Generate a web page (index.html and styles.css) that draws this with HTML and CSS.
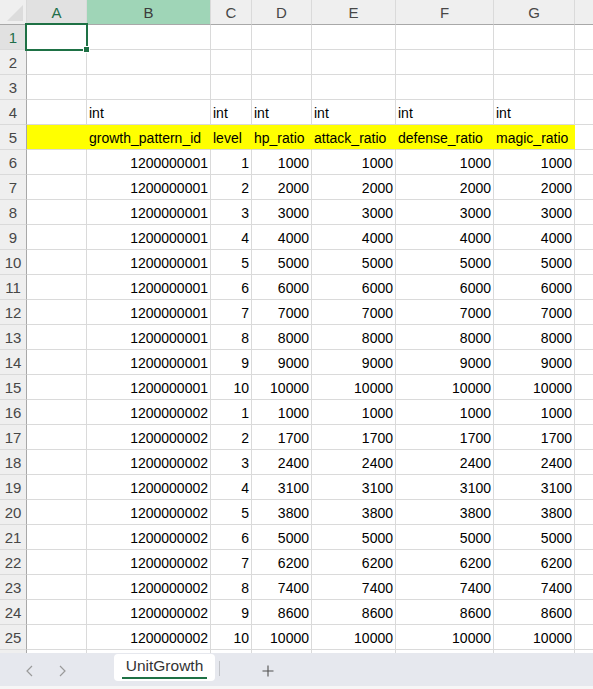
FILE: index.html
```html
<!DOCTYPE html>
<html lang="ja">
<head>
  <meta charset="UTF-8">
  <title>UnitGrowth</title>
  <link rel="stylesheet" href="styles.css">
</head>
<body>

  <div class="sheet">
    <div id="grid" class="grid"></div>
  </div>

  <div class="tabBar">
    <div class="tabNav">
      <svg width="10" height="12" viewBox="0 0 10 12"><polyline points="7,1 2,6 7,11" fill="none" stroke="#9a9a9a" stroke-width="1.2"/></svg>
      <svg width="10" height="12" viewBox="0 0 10 12"><polyline points="3,1 8,6 3,11" fill="none" stroke="#9a9a9a" stroke-width="1.2"/></svg>
    </div>
    <div class="tab active">UnitGrowth</div>
    <div class="tabSep"></div>
    <div class="addTab">
      <svg width="12" height="12" viewBox="0 0 12 12"><path d="M6 0.5V11.5M0.5 6H11.5" stroke="#505050" stroke-width="1.1"/></svg>
    </div>
  </div>
  <div class="statusStrip"></div>

  <script>
    const grid = document.getElementById('grid');
    const letters = ['A', 'B', 'C', 'D', 'E', 'F', 'G', ''];

    function addCell(text, cls) {
      const cell = document.createElement('div');
      cell.className = 'cell ' + (cls || '');
      if (text !== undefined && text !== '') {
        const span = document.createElement('span');
        span.textContent = text;
        cell.appendChild(span);
      }
      grid.appendChild(cell);
      return cell;
    }

    // column headers
    const corner = addCell('', 'corner');
    corner.innerHTML = '<div class="cornerMark"></div>';
    letters.forEach((l, i) => {
      let cls = 'colHead';
      if (i === 0) cls += ' selected';
      if (i === 1) cls += ' hover';
      addCell(l, cls);
    });

    // build row contents
    const rows = [];
    rows.push([]);
    rows.push([]);
    rows.push([]);
    rows.push(['', 'int', 'int', 'int', 'int', 'int', 'int']);
    rows.push(['', 'growth_pattern_id', 'level', 'hp_ratio', 'attack_ratio', 'defense_ratio', 'magic_ratio']);

    for (let lv = 1; lv <= 10; lv++) {
      const v = lv * 1000;
      rows.push(['', 1200000001, lv, v, v, v, v]);
    }
    const second = [1000, 1700, 2400, 3100, 3800, 5000, 6200, 7400, 8600, 10000];
    second.forEach((v, i) => {
      rows.push(['', 1200000002, i + 1, v, v, v, v]);
    });

    rows.forEach((row, r) => {
      const rowNum = r + 1;
      addCell(rowNum, 'rowHead' + (rowNum === 1 ? ' selected' : ''));
      for (let c = 0; c < 8; c++) {
        const val = row[c];
        let cls = typeof val === 'number' ? 'num' : 'txt';
        if (rowNum === 5 && c < 7) cls += ' yellow';
        const cell = addCell(val === undefined ? '' : val, cls);
        if (rowNum === 1 && c === 0) {
          cell.innerHTML = '<div class="selection"><div class="handle"></div></div>';
        }
      }
    });

    // next row peeks out under the tab bar, only its lines show
    addCell('', 'rowHead');
    for (let c = 0; c < 8; c++) addCell('', 'txt');
  </script>

</body>
</html>
```

FILE: styles.css
```css
body {
  margin: 0;
  width: 593px;
  height: 689px;
  overflow: hidden;
  display: flex;
  flex-direction: column;
  font-family: "Liberation Sans", Arial, sans-serif;
  background-color: #ffffff;
}

.sheet {
  height: 653px;
  overflow: hidden;
  flex-shrink: 0;
}

.grid {
  display: grid;
  grid-template-columns: 27px 60px 124px 41px 60px 84px 98px 81px 40px;
  grid-template-rows: 25px;
  grid-auto-rows: 25px;
}

.cell {
  box-sizing: border-box;
  border-right: 1px solid #dadada;
  border-bottom: 1px solid #dadada;
  display: flex;
  align-items: flex-end;
  padding: 0 2px 2px 2px;
  font-size: 14px;
  line-height: 17px;
  color: #000;
  white-space: nowrap;
  overflow: visible;
  position: relative;
}

.num {
  justify-content: flex-end;
}

.yellow {
  background-color: #ffff00;
  border-right-color: #ffff00;
}

/* headers */
.corner {
  background-color: #efefef;
  border-right-color: #dadada;
  border-bottom: 1px solid #a8a8a8;
  justify-content: flex-end;
  padding: 0 3px 3px 0;
}

.cornerMark {
  width: 16px;
  height: 16px;
  background-color: #dcdcdc;
  clip-path: polygon(100% 0, 100% 100%, 0 100%);
}

.colHead {
  background-color: #efefef;
  border-bottom: 1px solid #a8a8a8;
  justify-content: center;
  align-items: center;
  padding: 0;
  font-size: 15px;
  color: #474747;
}

.colHead.selected {
  background-color: #e1e1e1;
  color: #1f6f4a;
}

.colHead.hover {
  background-color: #9fd5b7;
  color: #3c3c3c;
}

.rowHead {
  background-color: #efefef;
  border-right: 1px solid #a8a8a8;
  justify-content: center;
  align-items: center;
  padding: 0;
  font-size: 15px;
  color: #474747;
}

.rowHead.selected {
  background-color: #e1e1e1;
  color: #1f6f4a;
}

/* active cell */
.selection {
  position: absolute;
  left: -2px;
  top: -2px;
  width: 63px;
  height: 28px;
  box-sizing: border-box;
  border: 2px solid #1e7145;
  z-index: 2;
}

.handle {
  position: absolute;
  right: -4px;
  bottom: -4px;
  width: 5px;
  height: 5px;
  background-color: #1e7145;
  border: 1px solid #ffffff;
}

/* sheet tabs */
.tabBar {
  height: 33px;
  background-color: #e6e8ee;
  display: flex;
  align-items: flex-start;
  flex-shrink: 0;
}

.tabNav {
  width: 114px;
  display: flex;
  gap: 22px;
  padding: 12px 0 0 25px;
  box-sizing: border-box;
}

.tab {
  margin-top: 1px;
  width: 101px;
  height: 27px;
  background-color: #ffffff;
  border-radius: 4px;
  box-sizing: border-box;
  text-align: center;
  font-size: 15.5px;
  line-height: 24px;
  color: #333333;
  position: relative;
}

.tab.active::after {
  content: "";
  position: absolute;
  left: 8px;
  right: 8px;
  top: 23px;
  height: 2px;
  background-color: #1e7145;
}

.tabSep {
  width: 1px;
  height: 15px;
  margin: 8px 0 0 4px;
  background-color: #c2c4c9;
}

.addTab {
  padding: 10px 0 0 42px;
}

.statusStrip {
  height: 3px;
  background-color: #f6f6f6;
}
```
